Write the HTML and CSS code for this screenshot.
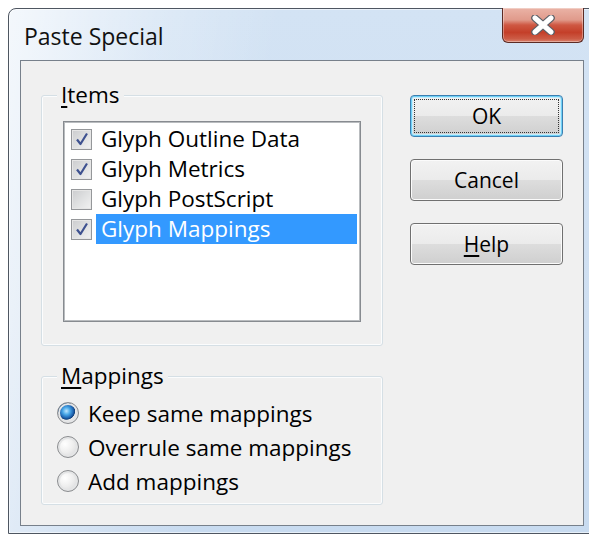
FILE: index.html
```html
<!DOCTYPE html>
<html lang="en">
<head>
<meta charset="utf-8">
<title>Paste Special</title>
<link rel="stylesheet" href="styles.css">
</head>
<body>
<div class="window">
  <div class="titlebar">
    <span class="title">Paste Special</span>
    <button class="close" aria-label="Close">
      <svg width="26" height="20" viewBox="0 0 26 20">
        <path d="M5 3 L21 17 M21 3 L5 17" stroke="#5b5f66" stroke-width="7.5" stroke-linecap="round"/>
        <path d="M5 3 L21 17 M21 3 L5 17" stroke="#ffffff" stroke-width="5" stroke-linecap="round"/>
      </svg>
    </button>
  </div>

  <div class="client">
    <div class="left-col">
      <div class="group items">
        <span class="group-label"><u>I</u>tems</span>
        <ul class="list">
          <li class="row"><span class="check on"></span><span class="item">Glyph Outline Data</span></li>
          <li class="row"><span class="check on"></span><span class="item">Glyph Metrics</span></li>
          <li class="row"><span class="check"></span><span class="item">Glyph PostScript</span></li>
          <li class="row"><span class="check on"></span><span class="item selected">Glyph Mappings</span></li>
        </ul>
      </div>

      <div class="group mappings">
        <span class="group-label"><u>M</u>appings</span>
        <div class="radio-row"><span class="radio on"></span><span>Keep same mappings</span></div>
        <div class="radio-row"><span class="radio"></span><span>Overrule same mappings</span></div>
        <div class="radio-row"><span class="radio"></span><span>Add mappings</span></div>
      </div>
    </div>

    <div class="buttons">
      <button class="btn default">OK</button>
      <button class="btn">Cancel</button>
      <button class="btn"><u>H</u>elp</button>
    </div>
  </div>
</div>
</body>
</html>
```

FILE: styles.css
```css
html, body {
  margin: 0;
  padding: 0;
}

body {
  width: 589px;
  height: 534px;
  overflow: hidden;
  background: #ffffff;
  font-family: "Open Sans", "Noto Sans", sans-serif;
  color: #000;
}

/* Window frame */
.window {
  margin: 8px 0 0 8px;
  width: 592px;
  height: 526px;
  box-sizing: border-box;
  border: 1px solid #4e5661;
  border-radius: 8px 8px 0 0;
  padding: 0 0 0 11px;
  background:
    linear-gradient(100deg, rgba(255,255,255,0.75) 0%, rgba(255,255,255,0.25) 22%, rgba(255,255,255,0) 40%),
    linear-gradient(180deg, #d3e3f4 0%, #cfdff1 60%, #c8dbf0 100%);
  box-shadow: inset 0 0 0 1px rgba(255,255,255,0.55);
}

.titlebar {
  width: 564px;
  height: 51px;
  display: flex;
  justify-content: space-between;
  align-items: flex-start;
}

.title {
  margin-top: 12px;
  padding-left: 4px;
  font-size: 23px;
  line-height: 30px;
  color: #111;
}

/* Close caption button */
.close {
  margin-top: -1px;
  width: 82px;
  height: 35px;
  padding: 0;
  box-sizing: border-box;
  border: 1px solid #5c2b24;
  border-top: none;
  border-radius: 0 0 6px 6px;
  background: linear-gradient(180deg, #eab3a6 0%, #e09a8b 35%, #cf5843 50%, #c43f29 72%, #cc5b45 90%, #d9806b 100%);
  box-shadow: inset 0 0 0 1px rgba(255,255,255,0.35);
  display: flex;
  align-items: center;
  justify-content: center;
}

/* Client area */
.client {
  width: 564px;
  height: 466px;
  box-sizing: border-box;
  border: 1px solid #77808b;
  background: #f0f0f0;
  display: flex;
  gap: 27px;
  padding: 0 20px;
}

.left-col {
  padding-top: 34px;
  display: flex;
  flex-direction: column;
  gap: 30px;
}

.group {
  position: relative;
  width: 342px;
  box-sizing: border-box;
  border: 1px solid #d5dfe5;
  border-radius: 3px;
  box-shadow: inset 0 0 0 1px #fbfcfd;
}

.group-label {
  position: absolute;
  left: 15px;
  top: -13px;
  padding: 0 4px;
  background: #f0f0f0;
  font-size: 22.5px;
  line-height: 24px;
}

.group-label u {
  text-underline-offset: 3px;
}

/* Items list box */
.items {
  height: 251px;
  padding: 25px 21px 0;
}

.list {
  margin: 0;
  padding: 2px 0 0;
  list-style: none;
  width: 298px;
  height: 201px;
  box-sizing: border-box;
  background: #fff;
  border: 1px solid #878b90;
  box-shadow: inset 0 0 0 1px #b9bcbf;
}

.row {
  height: 30px;
  display: flex;
  align-items: center;
  padding-left: 7px;
}

.check {
  width: 21px;
  height: 21px;
  box-sizing: border-box;
  flex: none;
  border: 1px solid #95979a;
  background: linear-gradient(135deg, #cbccce 0%, #dfe0e1 50%, #f2f2f2 100%);
  box-shadow: inset 0 0 0 1px #e6e6e6;
}

.check.on {
  background:
    url("data:image/svg+xml,%3Csvg xmlns='http://www.w3.org/2000/svg' width='18' height='18' viewBox='0 0 18 18'%3E%3Cpath d='M4 9.5 L7.5 14 L14 3.5' fill='none' stroke='%233f5290' stroke-width='2.2' stroke-linejoin='round'/%3E%3C/svg%3E") center / 18px 18px no-repeat,
    linear-gradient(135deg, #cbccce 0%, #dfe0e1 50%, #f2f2f2 100%);
}

.item {
  flex: 1;
  margin: 0 3px 0 4px;
  padding-left: 5px;
  font-size: 22.5px;
  line-height: 30px;
  white-space: nowrap;
}

.item.selected {
  background: #3399ff;
  color: #fff;
}

/* Mappings radio group */
.mappings {
  height: 129px;
  padding: 19px 0 0 15px;
}

.radio-row {
  height: 34px;
  display: flex;
  align-items: center;
  gap: 9px;
  font-size: 22.5px;
}

.radio {
  width: 22px;
  height: 22px;
  flex: none;
  box-sizing: border-box;
  border-radius: 50%;
  border: 1px solid #8a8c8f;
  background: radial-gradient(circle at 35% 35%, #ffffff 0%, #eeeeee 45%, #d0d1d3 100%);
  box-shadow: inset 0 0 0 2px #e4e5e6;
}

.radio.on {
  background:
    radial-gradient(circle at 42% 40%, #bfe6ff 0%, #4aa8e8 22%, #1d62b0 42%, #13417a 50%, rgba(0,0,0,0) 54%),
    radial-gradient(circle at 35% 35%, #ffffff 0%, #eeeeee 50%, #d0d1d3 100%);
}

/* Command buttons */
.buttons {
  padding-top: 34px;
  display: flex;
  flex-direction: column;
  gap: 22px;
}

.btn {
  width: 153px;
  height: 42px;
  box-sizing: border-box;
  border: 1px solid #707070;
  border-radius: 4px;
  background: linear-gradient(180deg, #f2f2f2 0%, #ebebeb 50%, #dddddd 51%, #cfcfcf 100%);
  box-shadow: inset 0 0 0 1px #fbfbfb;
  font-family: inherit;
  font-size: 21px;
  color: #000;
  padding: 0;
}

.btn u {
  text-underline-offset: 3px;
}

.btn.default {
  border-color: #3c7fb1;
  box-shadow: inset 0 0 0 1px #6fd0f6, inset 0 0 0 2px #c5ecfb;
  outline: 1px dotted #333;
  outline-offset: -5px;
}
```
